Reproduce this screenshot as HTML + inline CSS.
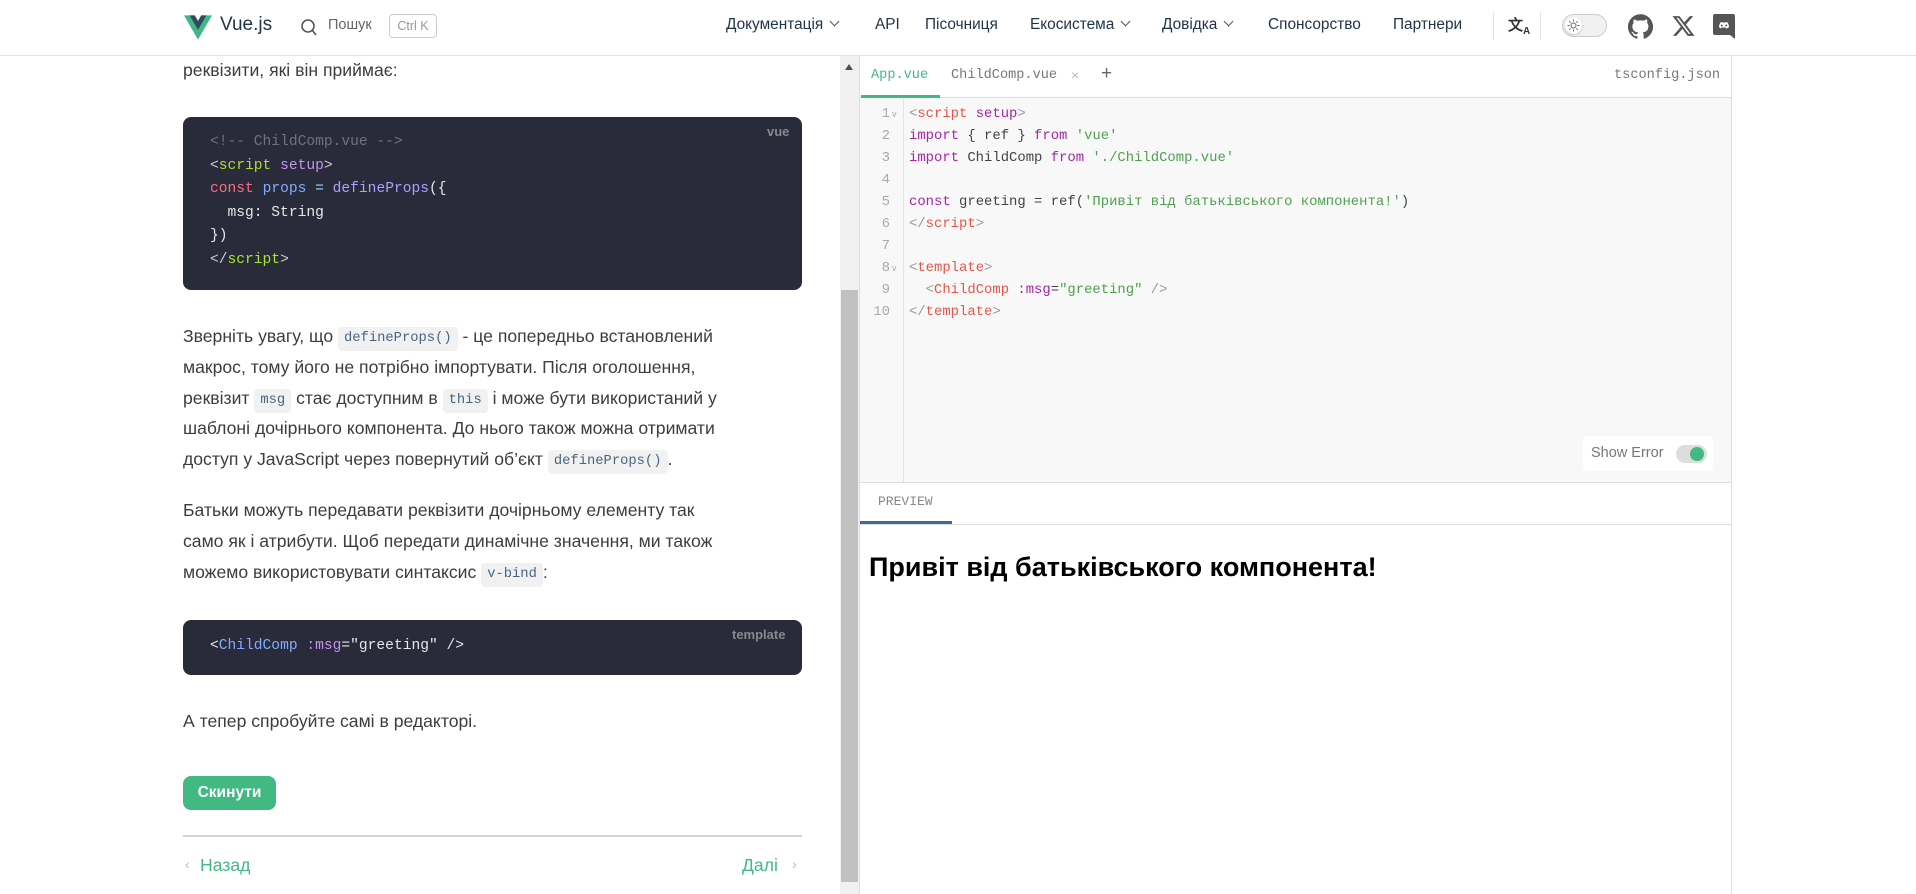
<!DOCTYPE html>
<html><head><meta charset="utf-8">
<style>
*{margin:0;padding:0;box-sizing:border-box}
body{width:1916px;height:894px;overflow:hidden;background:#fff;font-family:"Liberation Sans",sans-serif;color:#3c3c43;position:relative}
.a{position:absolute;white-space:nowrap}
.nav{font-size:15.4px;color:#213547;top:16px}
.chev{display:inline-block;width:7px;height:7px;border-right:1.3px solid #555;border-bottom:1.3px solid #555;transform:rotate(45deg);margin-left:8px;position:relative;top:-4px}
.p{font-size:17.6px;color:#3c3c43;line-height:30.8px}
.p div{height:30.8px}
code.i{font-family:"Liberation Mono",monospace;font-size:13.8px;line-height:18px;background:#f1f1f1;color:#476582;padding:3px 6px;border-radius:4px;display:inline-block;vertical-align:1px}
.cb{background:#292b3b;border-radius:8px}
.mono{font-family:"Liberation Mono",monospace}
.dk{font-size:14.6px;color:#e6e6e6;line-height:23.6px}
.ed{font-size:13.9px;line-height:22px;color:#444}
.ln{font-size:14px;line-height:22px;color:#aaa;text-align:right}
</style></head><body>
<!-- header -->
<div class="a" style="left:0;top:55px;width:1916px;height:1px;background:#e2e2e3"></div>
<svg class="a" style="left:184px;top:15px" width="28" height="25" viewBox="0 0 261.76 226.69"><path d="M161.096.001l-30.225 52.351L100.647.001H-.005l130.877 226.688L261.749.001z" fill="#41b883"/><path d="M161.096.001l-30.225 52.351L100.647.001H52.346l78.526 136.01L209.398.001z" fill="#34495e"/></svg>
<div class="a" style="left:220px;top:14px;font-size:19px;color:#213547">Vue.js</div>
<svg class="a" style="left:300px;top:18px" width="18" height="20" viewBox="0 0 18 20"><circle cx="8" cy="8" r="6" fill="none" stroke="#555" stroke-width="1.6"/><path d="M12.5 12.5L16 17" stroke="#555" stroke-width="1.6"/></svg>
<div class="a" style="left:328px;top:17px;font-size:14.5px;color:#666">Пошук</div>
<div class="a" style="left:389px;top:14px;width:48px;height:24px;border:1.3px solid #ccc;border-radius:4px;font-size:12.5px;color:#999;text-align:center;line-height:22px">Ctrl K</div>
<div class="a nav" style="left:726px">Документація<span class="chev"></span></div>
<div class="a nav" style="left:875px">API</div>
<div class="a nav" style="left:925px">Пісочниця</div>
<div class="a nav" style="left:1030px">Екосистема<span class="chev"></span></div>
<div class="a nav" style="left:1162px">Довідка<span class="chev"></span></div>
<div class="a nav" style="left:1268px">Спонсорство</div>
<div class="a nav" style="left:1393px">Партнери</div>
<div class="a" style="left:1493px;top:12px;width:1px;height:28px;background:#e2e2e3"></div>
<div class="a" style="left:1508px;top:14px;font-size:15px;color:#333;font-weight:bold">文<sub style="font-size:10px">A</sub></div>
<div class="a" style="left:1540px;top:12px;width:1px;height:28px;background:#e2e2e3"></div>
<div class="a" style="left:1562px;top:14px;width:45px;height:23px;border:1.3px solid #ccc;border-radius:12px;background:#f1f1f1"></div>
<div class="a" style="left:1565px;top:17px;width:17px;height:17px;border-radius:50%;background:#fff;box-shadow:0 1px 2px rgba(0,0,0,.2)"></div>
<svg class="a" style="left:1567px;top:19px" width="13" height="13" viewBox="0 0 13 13"><circle cx="6.5" cy="6.5" r="2.5" fill="none" stroke="#666" stroke-width="1"/><path d="M6.5 0.5v2M6.5 10.5v2M0.5 6.5h2M10.5 6.5h2M2.2 2.2l1.4 1.4M9.4 9.4l1.4 1.4M2.2 10.8l1.4-1.4M9.4 3.6l1.4-1.4" stroke="#666" stroke-width="1"/></svg>
<svg class="a" style="left:1628px;top:14px" width="25" height="25" viewBox="0 0 24 24"><path fill="#555" d="M12 .3a12 12 0 0 0-3.8 23.4c.6.1.8-.3.8-.6v-2c-3.3.7-4-1.6-4-1.6-.6-1.4-1.4-1.8-1.4-1.8-1-.7.1-.7.1-.7 1.2.1 1.8 1.2 1.8 1.2 1 1.8 2.8 1.3 3.5 1 0-.8.4-1.300.7-1.6-2.7-.3-5.5-1.3-5.5-6 0-1.2.5-2.3 1.3-3.1-.2-.4-.6-1.6 0-3.2 0 0 1-.3 3.4 1.2a11.5 11.5 0 0 1 6 0c2.3-1.5 3.3-1.2 3.3-1.2.6 1.6.2 2.8.1 3.2.8.8 1.3 1.9 1.3 3.2 0 4.6-2.8 5.6-5.5 5.9.5.4.9 1.1.9 2.2v3.3c0 .3.1.7.8.6A12 12 0 0 0 12 .3"/></svg>
<svg class="a" style="left:1672px;top:15px" width="23" height="22" viewBox="0 0 24 24"><path fill="#555" d="M18.9 1.2h3.7l-8 9.2L24 22.8h-7.4l-5.8-7.6-6.6 7.6H.5l8.6-9.8L0 1.2h7.6l5.2 6.9zm-1.3 19.4h2L6.5 3.2H4.3z"/></svg>
<svg class="a" style="left:1713px;top:14px" width="22" height="25" viewBox="0 0 22 25"><path fill="#555" d="M2 0h18a2 2 0 0 1 2 2v23l-5-4H2a2 2 0 0 1-2-2V2a2 2 0 0 1 2-2z"/><path fill="#fff" d="M6 13c0-3 2-5 2-5l2 .5h2l2-.5s2 2 2 5c0 0-1.5 1.5-3 1.5l-.6-1h-3.8l-.6 1C7.5 14.5 6 13 6 13z"/><circle cx="8.8" cy="11.5" r="1" fill="#555"/><circle cx="13.2" cy="11.5" r="1" fill="#555"/></svg>

<!-- left content -->
<div class="a p" style="left:183px;top:55px">реквізити, які він приймає:</div>
<div class="a cb" style="left:183px;top:117px;width:619px;height:173px"></div>
<div class="a" style="left:767px;top:124px;font-size:13px;color:#888;font-weight:bold">vue</div>
<div class="a mono dk" style="left:210px;top:131px">
<div style="color:#6b7280">&lt;!-- ChildComp.vue --&gt;</div>
<div><span style="color:#ccc">&lt;</span><span style="color:#a6e22e">script</span> <span style="color:#c792ea">setup</span><span style="color:#ccc">&gt;</span></div>
<div><span style="color:#ff6b81">const</span> <span style="color:#82aaff">props</span> <span style="color:#89ddff">=</span> <span style="color:#b19cff">defineProps</span>({</div>
<div>&nbsp;&nbsp;msg: String</div>
<div>})</div>
<div><span style="color:#ccc">&lt;/</span><span style="color:#a6e22e">script</span><span style="color:#ccc">&gt;</span></div>
</div>
<div class="a p" style="left:183px;top:321px">
<div>Зверніть увагу, що <code class="i">defineProps()</code> - це попередньо встановлений</div>
<div>макрос, тому його не потрібно імпортувати. Після оголошення,</div>
<div>реквізит <code class="i">msg</code> стає доступним в <code class="i">this</code> і може бути використаний у</div>
<div>шаблоні дочірнього компонента. До нього також можна отримати</div>
<div>доступ у JavaScript через повернутий об’єкт <code class="i">defineProps()</code>.</div>
</div>
<div class="a p" style="left:183px;top:495px">
<div>Батьки можуть передавати реквізити дочірньому елементу так</div>
<div>само як і атрибути. Щоб передати динамічне значення, ми також</div>
<div>можемо використовувати синтаксис <code class="i">v-bind</code>:</div>
</div>
<div class="a cb" style="left:183px;top:620px;width:619px;height:55px"></div>
<div class="a" style="left:732px;top:627px;font-size:13px;color:#888;font-weight:bold">template</div>
<div class="a mono dk" style="left:210px;top:635px">&lt;<span style="color:#82aaff">ChildComp</span> <span style="color:#c792ea">:msg</span>=<span>"greeting"</span> /&gt;</div>
<div class="a p" style="left:183px;top:706px">А тепер спробуйте самі в редакторі.</div>
<div class="a" style="left:183px;top:776px;width:93px;height:34px;background:#42b883;border-radius:8px;color:#fff;font-weight:bold;font-size:15.5px;text-align:center;line-height:34px">Скинути</div>
<div class="a" style="left:183px;top:835px;width:619px;height:1.5px;background:#d4d4d4"></div>
<div class="a" style="left:185px;top:856px;font-size:14px;color:#bbb">‹</div>
<div class="a" style="left:200px;top:855px;font-size:17.6px;color:#42b883">Назад</div>
<div class="a" style="left:742px;top:855px;font-size:17.6px;color:#42b883">Далі</div>
<div class="a" style="left:792px;top:856px;font-size:14px;color:#bbb">›</div>
<!-- scrollbar -->
<div class="a" style="left:840px;top:56px;width:19px;height:838px;background:#f1f1f1"></div>
<div class="a" style="left:845px;top:64px;width:0;height:0;border-left:4.5px solid transparent;border-right:4.5px solid transparent;border-bottom:6px solid #505050"></div>
<div class="a" style="left:841px;top:290px;width:17px;height:592px;background:#c1c1c1"></div>

<!-- right pane -->
<div class="a" style="left:859px;top:56px;width:1px;height:838px;background:#ddd"></div>
<div class="a" style="left:1731px;top:56px;width:1px;height:838px;background:#ddd"></div>
<div class="a" style="left:860px;top:98px;width:871px;height:384px;background:#f8f8f8"></div>
<div class="a" style="left:860px;top:97px;width:871px;height:1px;background:#ddd"></div>
<div class="a mono" style="left:871px;top:68px;font-size:13.6px;color:#42b883">App.vue</div>
<div class="a" style="left:861px;top:95px;width:79px;height:3px;background:#42b883"></div>
<div class="a mono" style="left:951px;top:68px;font-size:13.6px;color:#777">ChildComp.vue</div>
<div class="a" style="left:1071px;top:67px;font-size:14px;color:#bbb">×</div>
<div class="a" style="left:1101px;top:63px;font-size:19px;color:#666">+</div>
<div class="a mono" style="left:1614px;top:68px;font-size:13.6px;color:#777">tsconfig.json</div>
<div class="a" style="left:903px;top:98px;width:1px;height:384px;background:#e4e4e4"></div>
<div class="a mono ln" style="left:868px;top:103px;width:22px">1<br>2<br>3<br>4<br>5<br>6<br>7<br>8<br>9<br>10</div>
<div class="a" style="left:892px;top:103px;font-size:9px;line-height:22px;color:#aaa">v<br><br><br><br><br><br><br>v</div>
<div class="a mono ed" style="left:909px;top:103px">
<div><span style="color:#999">&lt;</span><span style="color:#e45649">script</span> <span style="color:#a626a4">setup</span><span style="color:#999">&gt;</span></div>
<div><span style="color:#a626a4">import</span> { ref } <span style="color:#a626a4">from</span> <span style="color:#50a14f">'vue'</span></div>
<div><span style="color:#a626a4">import</span> ChildComp <span style="color:#a626a4">from</span> <span style="color:#50a14f">'./ChildComp.vue'</span></div>
<div>&nbsp;</div>
<div><span style="color:#a626a4">const</span> greeting = ref(<span style="color:#50a14f">'Привіт від батьківського компонента!'</span>)</div>
<div><span style="color:#999">&lt;/</span><span style="color:#e45649">script</span><span style="color:#999">&gt;</span></div>
<div>&nbsp;</div>
<div><span style="color:#999">&lt;</span><span style="color:#e45649">template</span><span style="color:#999">&gt;</span></div>
<div>&nbsp;&nbsp;<span style="color:#999">&lt;</span><span style="color:#e45649">ChildComp</span> <span style="color:#a626a4">:msg</span>=<span style="color:#50a14f">"greeting"</span> <span style="color:#999">/&gt;</span></div>
<div><span style="color:#999">&lt;/</span><span style="color:#e45649">template</span><span style="color:#999">&gt;</span></div>
</div>
<div class="a" style="left:1583px;top:436px;width:130px;height:35px;background:#fff;border-radius:3px"></div>
<div class="a" style="left:1591px;top:445px;font-size:14.5px;color:#777">Show Error</div>
<div class="a" style="left:1676px;top:445px;width:31px;height:18px;border-radius:9px;background:#ddd"></div>
<div class="a" style="left:1690px;top:447px;width:14px;height:14px;border-radius:50%;background:#42b883"></div>
<div class="a" style="left:860px;top:482px;width:871px;height:1px;background:#ddd"></div>
<div class="a mono" style="left:878px;top:494px;font-size:13px;color:#888">PREVIEW</div>
<div class="a" style="left:860px;top:521px;width:92px;height:3px;background:#3d6a9a"></div>
<div class="a" style="left:860px;top:524px;width:871px;height:1px;background:#ddd"></div>
<div class="a" style="left:869px;top:552px;font-size:27px;font-weight:bold;color:#000">Привіт від батьківського компонента!</div>
</body></html>
